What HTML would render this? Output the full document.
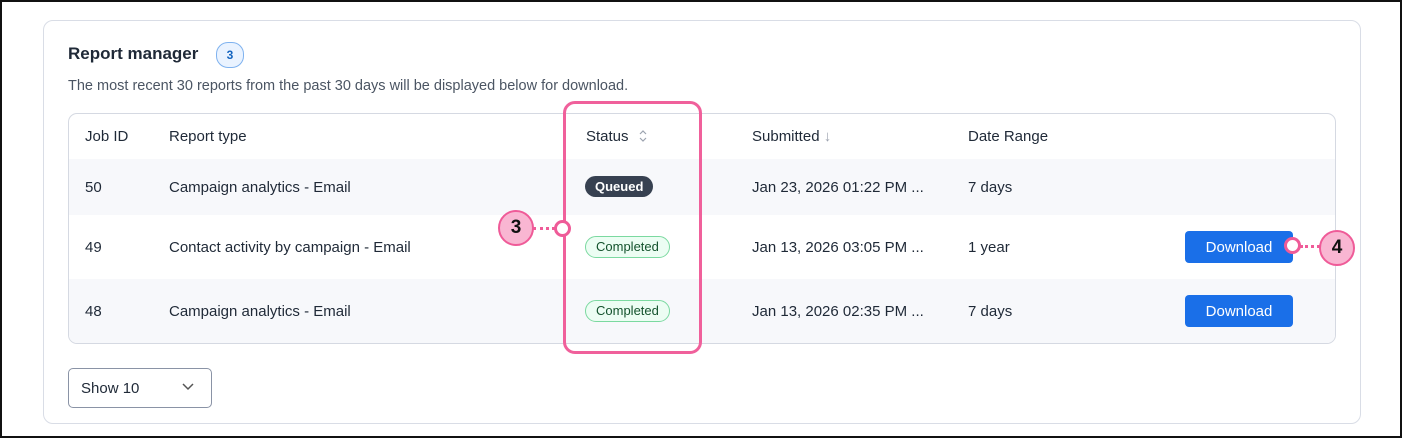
<!DOCTYPE html>
<html><head><style>
body{margin:0;width:1402px;height:438px;position:relative;overflow:hidden;background:#fff;font-family:"Liberation Sans",sans-serif;color:#1f2937}
.frame{position:absolute;left:0;top:0;width:1398px;height:434px;border:2px solid #111}
.card{position:absolute;left:43px;top:20px;width:1316px;height:402px;border:1px solid #d9dde6;border-radius:10px}
.abs{position:absolute;white-space:nowrap}
.title{left:68px;top:44px;font-size:17px;font-weight:bold;color:#1f2937}
.badge{left:216px;top:42px;width:26px;height:24px;border:1px solid #7fb2ef;background:#eaf3ff;border-radius:12px;font-size:12px;font-weight:bold;color:#1565c0;text-align:center;line-height:24px}
.sub{left:68px;top:78px;font-size:14.5px;color:#4b5563}
.table{position:absolute;left:68px;top:113px;width:1266px;height:229px;border:1px solid #d5d9e2;border-radius:9px;overflow:hidden}
.row{position:absolute;left:0;width:1266px}
.t{font-size:15px;color:#1f2937}
.pill{font-size:13px;border-radius:11px;height:21px;line-height:21px;padding:0 10px}
.q{background:#374151;color:#fff;font-weight:bold}
.c{background:#ecfdf3;border:1px solid #7bd9a0;color:#14532d;height:20px;line-height:20px}
.btn{background:#1a6fe8;color:#fff;border-radius:4px;width:108px;height:32px;line-height:33px;text-align:center;font-size:15px}
.pink{border:3px solid #f0609b}
.circ{width:32px;height:32px;border-radius:50%;background:#f9b6d2;border:2px solid #ef5b98;text-align:center;line-height:32px;font-weight:bold;font-size:19px;color:#111}
.dot{width:11px;height:11px;border-radius:50%;background:#fff;border:3px solid #ef5b98}
.dash{height:0;border-top:3px dotted #ef5b98}
</style></head><body>
<div class="frame"></div>
<div class="card"></div>
<div class="abs title">Report manager</div>
<div class="abs badge">3</div>
<div class="abs sub">The most recent 30 reports from the past 30 days will be displayed below for download.</div>
<div class="table">
 <div class="row" style="top:45px;height:56px;background:#f7f8fb"></div>
 <div class="row" style="top:165px;height:64px;background:#f7f8fb"></div>
</div>
<div class="abs t" style="left:85px;top:128px">Job ID</div>
<div class="abs t" style="left:169px;top:128px">Report type</div>
<div class="abs t" style="left:586px;top:128px">Status</div>
<svg class="abs" style="left:638px;top:128px" width="10" height="16"><path d="M2 6 L5 3 L8 6 M2 10 L5 13 L8 10" stroke="#9ca3af" stroke-width="1.2" fill="none"/></svg>
<div class="abs t" style="left:752px;top:128px">Submitted <span style="color:#9ca3af">&#8595;</span></div>
<div class="abs t" style="left:968px;top:128px">Date Range</div>

<div class="abs t" style="left:85px;top:179px">50</div>
<div class="abs t" style="left:169px;top:179px">Campaign analytics - Email</div>
<div class="abs pill q" style="left:585px;top:176px">Queued</div>
<div class="abs t" style="left:752px;top:179px">Jan 23, 2026 01:22 PM ...</div>
<div class="abs t" style="left:968px;top:179px">7 days</div>

<div class="abs t" style="left:85px;top:239px">49</div>
<div class="abs t" style="left:169px;top:239px">Contact activity by campaign - Email</div>
<div class="abs pill c" style="left:585px;top:236px">Completed</div>
<div class="abs t" style="left:752px;top:239px">Jan 13, 2026 03:05 PM ...</div>
<div class="abs t" style="left:968px;top:239px">1 year</div>
<div class="abs btn" style="left:1185px;top:231px">Download</div>

<div class="abs t" style="left:85px;top:303px">48</div>
<div class="abs t" style="left:169px;top:303px">Campaign analytics - Email</div>
<div class="abs pill c" style="left:585px;top:300px">Completed</div>
<div class="abs t" style="left:752px;top:303px">Jan 13, 2026 02:35 PM ...</div>
<div class="abs t" style="left:968px;top:303px">7 days</div>
<div class="abs btn" style="left:1185px;top:295px">Download</div>

<div class="abs pink" style="left:563px;top:101px;width:133px;height:247px;border-radius:12px"></div>
<div class="abs circ" style="left:498px;top:210px">3</div>
<div class="abs dash" style="left:533px;top:227px;width:22px"></div>
<div class="abs dot" style="left:554px;top:220px"></div>
<div class="abs dot" style="left:1284px;top:237px"></div>
<div class="abs dash" style="left:1300px;top:245px;width:20px"></div>
<div class="abs circ" style="left:1319px;top:230px">4</div>

<div class="abs" style="left:68px;top:368px;width:142px;height:38px;border:1px solid #8a93a6;border-radius:5px"></div>
<div class="abs t" style="left:81px;top:380px">Show 10</div>
<svg class="abs" style="left:181px;top:382px" width="14" height="10"><path d="M2 2 L7 7 L12 2" stroke="#555" stroke-width="1.5" fill="none"/></svg>
</body></html>
